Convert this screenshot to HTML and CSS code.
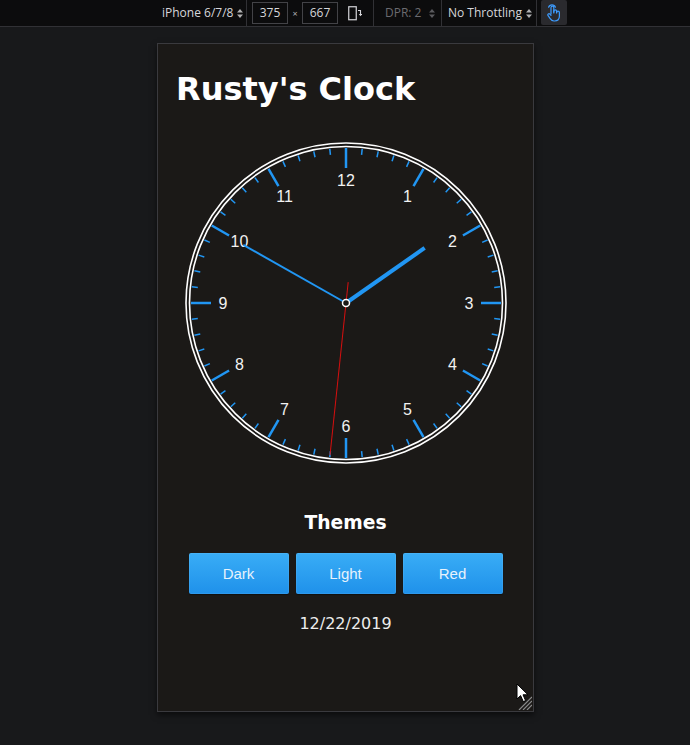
FILE: index.html
```html
<!DOCTYPE html>
<html>
<head>
<meta charset="utf-8">
<title>Rusty's Clock</title>
<link rel="stylesheet" href="styles.css">
</head>
<body>
<div class="toolbar">
  <div class="tb-group device">
    <span class="tb-label">iPhone 6/7/8</span>
    <svg class="updown" width="6" height="9" viewBox="0 0 6 9"><path d="M3 0L6 3.5H0Z M3 9L6 5.5H0Z"/></svg>
  </div>
  <div class="sep"></div>
  <div class="tb-group dims">
    <div class="dim-input">375</div>
    <span class="times">×</span>
    <div class="dim-input">667</div>
    <svg class="rotate" width="14" height="15" viewBox="0 0 14 15"><rect x="0.75" y="0.75" width="7.5" height="13" fill="none" stroke="#d7d7db" stroke-width="1.2"/><path d="M10 4.5h2.5v4" fill="none" stroke="#d7d7db" stroke-width="1.1"/><path d="M10.8 8h3.4l-1.7 2.2Z" fill="#d7d7db"/></svg>
  </div>
  <div class="sep"></div>
  <div class="tb-group dpr">
    <span class="tb-label dim">DPR: 2</span>
    <svg class="updown faded" width="6" height="9" viewBox="0 0 6 9"><path d="M3 0L6 3.5H0Z M3 9L6 5.5H0Z"/></svg>
  </div>
  <div class="sep"></div>
  <div class="tb-group throttle">
    <span class="tb-label">No Throttling</span>
    <svg class="updown" width="6" height="9" viewBox="0 0 6 9"><path d="M3 0L6 3.5H0Z M3 9L6 5.5H0Z"/></svg>
  </div>
  <div class="sep"></div>
  <div class="touch">
    <svg width="16" height="19" viewBox="0 0 16 19"><g fill="none" stroke="#3d9cff" stroke-width="1.2" stroke-linecap="round" stroke-linejoin="round"><path d="M2.6 4.2a3.6 3.6 0 0 1 6.8 0"/><path d="M5 11V4.6a1.4 1.4 0 0 1 2.8 0V10"/><path d="M7.8 9V8.3a1.4 1.4 0 0 1 2.8 0V10"/><path d="M10.6 9.6a1.4 1.4 0 0 1 2.8 0V13c0 3-2 5-4.8 5H8c-1.8 0-2.8-0.8-3.800-2.3L1.9 12.4a1.2 1.2 0 0 1 1.9-1.4L5 12.3"/></g></svg>
  </div>
</div>

<div class="device-frame">
  <h1 class="title">Rusty's Clock</h1>
  <svg class="clock" width="330" height="330" viewBox="-165 -165 330 330">
    <defs>
      <line id="mt" x1="0" y1="-155" x2="0" y2="-149" stroke="#2196f3" stroke-width="1.5"/>
      <line id="ht" x1="0" y1="-155" x2="0" y2="-135" stroke="#2196f3" stroke-width="2.5"/>
    </defs>
    <circle r="160" fill="none" stroke="#ffffff" stroke-width="1.6"/>
    <circle r="156.5" fill="none" stroke="#ffffff" stroke-width="1.6"/>
    <g>
      <use href="#ht" transform="rotate(0)"/>
      <use href="#ht" transform="rotate(30)"/>
      <use href="#ht" transform="rotate(60)"/>
      <use href="#ht" transform="rotate(90)"/>
      <use href="#ht" transform="rotate(120)"/>
      <use href="#ht" transform="rotate(150)"/>
      <use href="#ht" transform="rotate(180)"/>
      <use href="#ht" transform="rotate(210)"/>
      <use href="#ht" transform="rotate(240)"/>
      <use href="#ht" transform="rotate(270)"/>
      <use href="#ht" transform="rotate(300)"/>
      <use href="#ht" transform="rotate(330)"/>
    </g>
    <g>
      <use href="#mt" transform="rotate(6)"/><use href="#mt" transform="rotate(12)"/><use href="#mt" transform="rotate(18)"/><use href="#mt" transform="rotate(24)"/>
      <use href="#mt" transform="rotate(36)"/><use href="#mt" transform="rotate(42)"/><use href="#mt" transform="rotate(48)"/><use href="#mt" transform="rotate(54)"/>
      <use href="#mt" transform="rotate(66)"/><use href="#mt" transform="rotate(72)"/><use href="#mt" transform="rotate(78)"/><use href="#mt" transform="rotate(84)"/>
      <use href="#mt" transform="rotate(96)"/><use href="#mt" transform="rotate(102)"/><use href="#mt" transform="rotate(108)"/><use href="#mt" transform="rotate(114)"/>
      <use href="#mt" transform="rotate(126)"/><use href="#mt" transform="rotate(132)"/><use href="#mt" transform="rotate(138)"/><use href="#mt" transform="rotate(144)"/>
      <use href="#mt" transform="rotate(156)"/><use href="#mt" transform="rotate(162)"/><use href="#mt" transform="rotate(168)"/><use href="#mt" transform="rotate(174)"/>
      <use href="#mt" transform="rotate(186)"/><use href="#mt" transform="rotate(192)"/><use href="#mt" transform="rotate(198)"/><use href="#mt" transform="rotate(204)"/>
      <use href="#mt" transform="rotate(216)"/><use href="#mt" transform="rotate(222)"/><use href="#mt" transform="rotate(228)"/><use href="#mt" transform="rotate(234)"/>
      <use href="#mt" transform="rotate(246)"/><use href="#mt" transform="rotate(252)"/><use href="#mt" transform="rotate(258)"/><use href="#mt" transform="rotate(264)"/>
      <use href="#mt" transform="rotate(276)"/><use href="#mt" transform="rotate(282)"/><use href="#mt" transform="rotate(288)"/><use href="#mt" transform="rotate(294)"/>
      <use href="#mt" transform="rotate(306)"/><use href="#mt" transform="rotate(312)"/><use href="#mt" transform="rotate(318)"/><use href="#mt" transform="rotate(324)"/>
      <use href="#mt" transform="rotate(336)"/><use href="#mt" transform="rotate(342)"/><use href="#mt" transform="rotate(348)"/><use href="#mt" transform="rotate(354)"/>
    </g>
    <g class="numerals" text-anchor="middle" dominant-baseline="central">
      <text x="61.5" y="-106.5">1</text>
      <text x="106.5" y="-61.5">2</text>
      <text x="123" y="0">3</text>
      <text x="106.5" y="61.5">4</text>
      <text x="61.5" y="106.5">5</text>
      <text x="0" y="123">6</text>
      <text x="-61.5" y="106.5">7</text>
      <text x="-106.5" y="61.5">8</text>
      <text x="-123" y="0">9</text>
      <text x="-106.5" y="-61.5">10</text>
      <text x="-61.5" y="-106.5">11</text>
      <text x="0" y="-123">12</text>
    </g>
    <line x1="0" y1="0" x2="0" y2="-96" stroke="#2196f3" stroke-width="4" transform="rotate(55)"/>
    <line x1="0" y1="0" x2="0" y2="-118" stroke="#2196f3" stroke-width="2" transform="rotate(299.5)"/>
    <line x1="0" y1="21" x2="0" y2="-153" stroke="#d40f0f" stroke-width="1" transform="rotate(186)"/>
    <circle r="3.5" fill="#1b1917" stroke="#ffffff" stroke-width="1.5"/>
  </svg>
  <h3 class="themes-title">Themes</h3>
  <div class="theme-buttons">
    <button class="theme-btn">Dark</button>
    <button class="theme-btn">Light</button>
    <button class="theme-btn">Red</button>
  </div>
  <div class="date">12/22/2019</div>

  <svg class="cursor" width="13" height="20" viewBox="0 0 13 20"><path d="M1 1V16L4.6 12.6L7.3 18.6L9.6 17.6L7 11.8H12Z" fill="#ffffff" stroke="#000000" stroke-width="1" stroke-linejoin="round"/></svg>
  <svg class="grip" width="14" height="14" viewBox="0 0 14 14"><g stroke="#8a8a8a" stroke-width="1.2"><line x1="14" y1="1" x2="1" y2="14"/><line x1="14" y1="5" x2="5" y2="14"/><line x1="14" y1="9" x2="9" y2="14"/></g></svg>
</div>
</body>
</html>
```

FILE: styles.css
```css
* { box-sizing: border-box; }

body {
  margin: 0;
  background: #18191b;
  font-family: "DejaVu Sans", sans-serif;
  height: 745px;
  overflow: hidden;
}

.toolbar {
  display: flex;
  align-items: stretch;
  height: 27px;
  background: #0c0c0d;
  border-bottom: 1px solid #313135;
  padding-left: 156px;
  font-family: "Open Sans", sans-serif;
  font-size: 12px;
  color: #d7d7db;
  white-space: nowrap;
}

.tb-group {
  display: flex;
  align-items: center;
  flex-shrink: 0;
}

.device { width: 90px; padding-left: 6px; }
.dims { width: 126px; padding-left: 5px; }
.dpr { width: 67px; padding-left: 11px; }
.throttle { width: 94px; padding-left: 6px; }

.tb-label { line-height: 16px; white-space: nowrap; }
.tb-label.dim { color: #6b6b70; }

.updown { fill: #b1b1b3; margin-left: 4px; flex-shrink: 0; }
.updown.faded { fill: #5a5a5e; margin-left: 8px; }

.sep {
  width: 1px;
  flex-shrink: 0;
  background: #313135;
}

.dim-input {
  width: 36px;
  height: 22px;
  border: 1px solid #434347;
  display: flex;
  align-items: center;
  justify-content: center;
  font-size: 12px;
  margin-top: -1px;
}

.times {
  width: 14px;
  text-align: center;
  font-size: 9px;
  color: #b1b1b3;
}

.rotate { margin-left: 10px; }

.touch {
  width: 26px;
  height: 25px;
  margin-left: 4px;
  background: #2a2a2e;
  border-radius: 2px;
  display: flex;
  align-items: center;
  justify-content: center;
}

.device-frame {
  position: relative;
  width: 377px;
  height: 669px;
  margin: 16px 0 0 157px;
  border: 1px solid #3a3a3e;
  background: #1b1917;
  box-shadow: 0 3px 6px rgba(0, 0, 0, 0.55);
}

.title {
  margin: 0;
  padding: 27px 0 0 18px;
  font-family: "DejaVu Sans", sans-serif;
  font-weight: bold;
  font-size: 32px;
  line-height: 37px;
  color: #ffffff;
}

.clock {
  display: block;
  margin: 30px 0 0 23px;
}

.numerals {
  font-family: "Liberation Sans", Arial, sans-serif;
  font-size: 16px;
  fill: #f2f2f2;
}

.themes-title {
  margin: 44px 0 0;
  text-align: center;
  font-family: "DejaVu Sans", sans-serif;
  font-weight: bold;
  font-size: 18.72px;
  line-height: 22px;
  color: #ffffff;
}

.theme-buttons {
  display: flex;
  justify-content: center;
  gap: 7px;
  margin-top: 19px;
}

.theme-btn {
  width: 100px;
  height: 41px;
  border: none;
  border-radius: 2px;
  background: linear-gradient(#39adf6, #1f91ea);
  box-shadow: inset 0 0 0 1px rgba(255, 255, 255, 0.07), 0 1px 1px rgba(0, 0, 0, 0.4);
  color: #e6f2fc;
  font-family: "Liberation Sans", Arial, sans-serif;
  font-size: 15px;
  padding: 0;
}

.date {
  margin-top: 20px;
  text-align: center;
  font-family: "DejaVu Sans", sans-serif;
  font-size: 16px;
  line-height: 19px;
  color: #ececec;
}

.cursor {
  position: absolute;
  left: 358px;
  top: 639px;
}

.grip {
  position: absolute;
  right: 1px;
  bottom: 1px;
}
```
